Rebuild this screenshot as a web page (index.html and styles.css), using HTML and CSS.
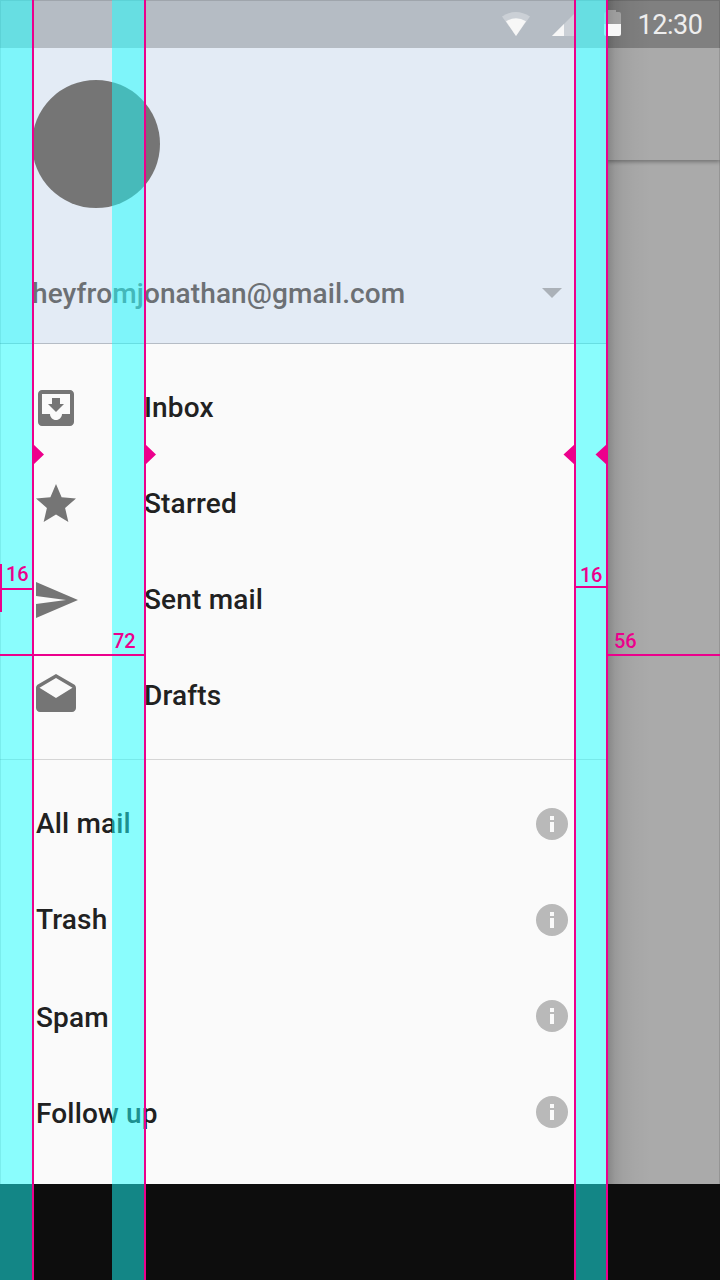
FILE: index.html
```html
<!DOCTYPE html>
<html lang="en">
<head>
<meta charset="utf-8">
<title>Navigation drawer keylines</title>
<link rel="stylesheet" href="styles.css">
</head>
<body>
<div class="device">
  <div class="screen">
    <nav class="drawer">
      <header class="account">
        <div class="avatar"></div>
        <div class="account-row">
          <span class="email">heyfromjonathan@gmail.com</span>
          <svg class="caret" width="20" height="10" viewBox="0 0 20 10"><path d="M0 0h20L10 10z"/></svg>
        </div>
      </header>
      <ul class="menu primary">
        <li class="item"><svg class="icon" viewBox="0 0 24 24"><path d="M19 3H4.990C3.880 3 3 3.900 3 5v14c0 1.100.880 2 1.990 2H19c1.100 0 2-.9 2-2V5c0-1.100-.9-2-2-2zm0 12h-4c0 1.660-1.350 3-3 3s-3-1.340-3-3H4.990V5H19v10zM16 10h-2V7h-4v3H8l4 4 4-4z"/></svg><span>Inbox</span></li>
        <li class="item"><svg class="icon" viewBox="0 0 24 24"><path d="M12 17.270L18.180 21l-1.640-7.030L22 9.240l-7.190-.610L12 2 9.190 8.630 2 9.240l5.460 4.730L5.820 21z"/></svg><span>Starred</span></li>
        <li class="item"><svg class="icon" viewBox="0 0 24 24"><path d="M2.010 21L23 12 2.010 3 2 10l15 2-15 2z"/></svg><span>Sent mail</span></li>
        <li class="item"><svg class="icon" viewBox="0 0 24 24"><path d="M21.990 8c0-.720-.370-1.350-.940-1.700L12 1 2.950 6.300C2.380 6.650 2 7.280 2 8v10c0 1.100.9 2 2 2h16c1.100 0 2-.9 2-2l-.010-10zM12 13L3.740 7.840 12 3l8.260 4.840L12 13z"/></svg><span>Drafts</span></li>
      </ul>
      <ul class="menu secondary">
        <li class="item"><span>All mail</span><svg class="info" viewBox="0 0 32 32"><circle cx="16" cy="16" r="16"/><path d="M14 8h4v4h-4zM14 14h4v10h-4z"/></svg></li>
        <li class="item"><span>Trash</span><svg class="info" viewBox="0 0 32 32"><circle cx="16" cy="16" r="16"/><path d="M14 8h4v4h-4zM14 14h4v10h-4z"/></svg></li>
        <li class="item low"><span>Spam</span><svg class="info" viewBox="0 0 32 32"><circle cx="16" cy="16" r="16"/><path d="M14 8h4v4h-4zM14 14h4v10h-4z"/></svg></li>
        <li class="item low"><span>Follow up</span><svg class="info" viewBox="0 0 32 32"><circle cx="16" cy="16" r="16"/><path d="M14 8h4v4h-4zM14 14h4v10h-4z"/></svg></li>
      </ul>
    </nav>
    <main class="content">
      <div class="status-shade"></div>
      <div class="app-bar"></div>
    </main>
    <div class="status-bar">
      <svg class="wifi" width="28" height="24" viewBox="0 0 28 24"><path class="dim" d="M0 4.500Q14-4.500 28 4.500L14 24z"/><path class="lit" d="M4 9.300Q14 3 24 9.300L14 24z"/></svg>
      <svg class="signal" width="24" height="24" viewBox="0 0 24 24"><path class="dim" d="M0 24L24 0v24z"/><path class="lit" d="M0 24L12 12v12z"/></svg>
      <svg class="battery" width="17" height="26" viewBox="0 0 17 26"><path class="dim" d="M4 0h8v2h3q2 0 2 2v10H0V4q0-2 2-2h2z"/><path class="lit" d="M0 14h17v10q0 2-2 2H2q-2 0-2-2z"/></svg>
      <span class="clock">12:30</span>
    </div>
    <div class="screen-edge"></div>
  </div>
  <div class="nav-bar"></div>

  <div class="keylines">
    <i class="band band-start"></i>
    <i class="band band-middle"></i>
    <i class="band band-end"></i>
    <i class="line line-16"></i>
    <i class="line line-72"></i>
    <i class="line line-inner"></i>
    <i class="line line-edge"></i>
    <svg class="arrows" width="720" height="24" viewBox="0 0 720 24"><path d="M33 1l11 10.500L33 22zM145 1l11 10.500L145 22zM575 1l-11.500 10.500L575 22zM607 1l-11.500 10.500L607 22z"/></svg>
    <i class="tick"></i>
    <span class="measure measure-start">16</span>
    <span class="measure measure-text">72</span>
    <span class="measure measure-end">16</span>
    <span class="measure measure-outside">56</span>
  </div>
</div>
</body>
</html>
```
FILE: styles.css
```css
* { box-sizing: border-box; }
body { margin: 0; font-family: Roboto, sans-serif; }

.device {
  position: relative;
  display: flex;
  flex-direction: column;
  width: 720px;
  height: 1280px;
  overflow: hidden;
}
.screen { position: relative; display: flex; height: 1184px; }
.nav-bar { height: 96px; background: #0d0d0d; }

/* Drawer */
.drawer {
  width: 607px;
  height: 1184px;
  background: #fafafa;
  font-size: 28px;
  font-weight: 500;
  letter-spacing: .17px;
  color: #212121;
}
.account {
  display: flex;
  flex-direction: column;
  justify-content: space-between;
  height: 344px;
  padding: 80px 45px 30px 32px;
  background: #e3ebf5;
  border-bottom: 1px solid #b5bcc5;
}
.avatar { width: 128px; height: 128px; border-radius: 50%; background: #757575; }
.account-row {
  display: flex;
  align-items: center;
  justify-content: space-between;
  height: 40px;
  color: #6c7074;
}
.email { padding-top: 2px; line-height: 40px; letter-spacing: .11px; }
.caret { fill: #abb1b8; }

.menu { margin: 0; padding: 16px 0; list-style: none; }
.item { display: flex; align-items: center; height: 96px; line-height: 40px; }
.primary { height: 416px; padding-bottom: 15px; border-bottom: 1px solid #d5d5d5; }
.primary .item { gap: 64px; padding-left: 32px; }
.icon { width: 48px; height: 48px; fill: #757575; }
.secondary .item { justify-content: space-between; padding: 0 39px 0 36px; }
.secondary .low span { padding-top: 4px; }
.info { width: 32px; height: 32px; fill: #b9b9b9; }
.info path { fill: #fafafa; }

/* Dimmed content behind the drawer */
.content {
  flex: 1;
  background: linear-gradient(90deg, rgba(0,0,0,.22), rgba(0,0,0,.1) 8px, rgba(0,0,0,.05) 16px, rgba(0,0,0,.02) 28px, transparent 44px), #aaa;
}
.status-shade { height: 48px; background: rgba(0,0,0,.06); }
.app-bar { height: 112px; box-shadow: 0 2px 4px rgba(0,0,0,.32); clip-path: inset(0 0 -6px 0); }

/* Status bar */
.status-bar {
  position: absolute;
  inset: 0 0 auto 0;
  display: flex;
  align-items: flex-start;
  height: 48px;
  padding: 10px 0 0 502px;
  background: rgba(0,0,0,.2);
}
.wifi, .signal { margin-top: 2px; }
.signal { margin-left: 22px; }
.battery { margin-left: 27.5px; }
.dim { fill: rgba(255,255,255,.3); }
.lit { fill: #f7f7f7; }
.clock { margin: -1px 0 0 17px; font-size: 27px; line-height: 32px; letter-spacing: -.45px; color: #eee; }
.screen-edge { position: absolute; inset: 0; border: 1px solid rgba(0,0,0,.12); border-bottom: 0; }

/* Keyline overlay */
.keylines { position: absolute; inset: 0; color: #ec008c; }
.band, .line { position: absolute; top: 0; bottom: 0; }
.band { width: 32px; background: rgba(26,255,255,.5); }
.band-start { left: 0; }
.band-middle { left: 112px; }
.band-end { left: 576px; width: 30px; }
.line { width: 2px; background: currentColor; }
.line-16 { left: 32px; }
.line-72 { left: 144px; }
.line-inner { left: 574px; }
.line-edge { left: 606px; }
.arrows { position: absolute; top: 443px; left: 0; fill: currentColor; }
.tick { position: absolute; left: 0; top: 564px; width: 2px; height: 48px; background: currentColor; }
.measure {
  position: absolute;
  height: 26px;
  border-bottom: 2px solid currentColor;
  font-size: 20px;
  font-weight: 500;
  line-height: 22px;
}
.measure-start { left: 0; top: 564px; width: 33px; padding-left: 6px; line-height: 20px; }
.measure-text { left: 0; top: 630px; width: 145px; padding-left: 113px; }
.measure-end { left: 575px; top: 562px; width: 32px; padding-left: 5px; line-height: 26px; letter-spacing: -.3px; }
.measure-outside { left: 607px; top: 630px; width: 113px; padding-left: 7px; }
```
